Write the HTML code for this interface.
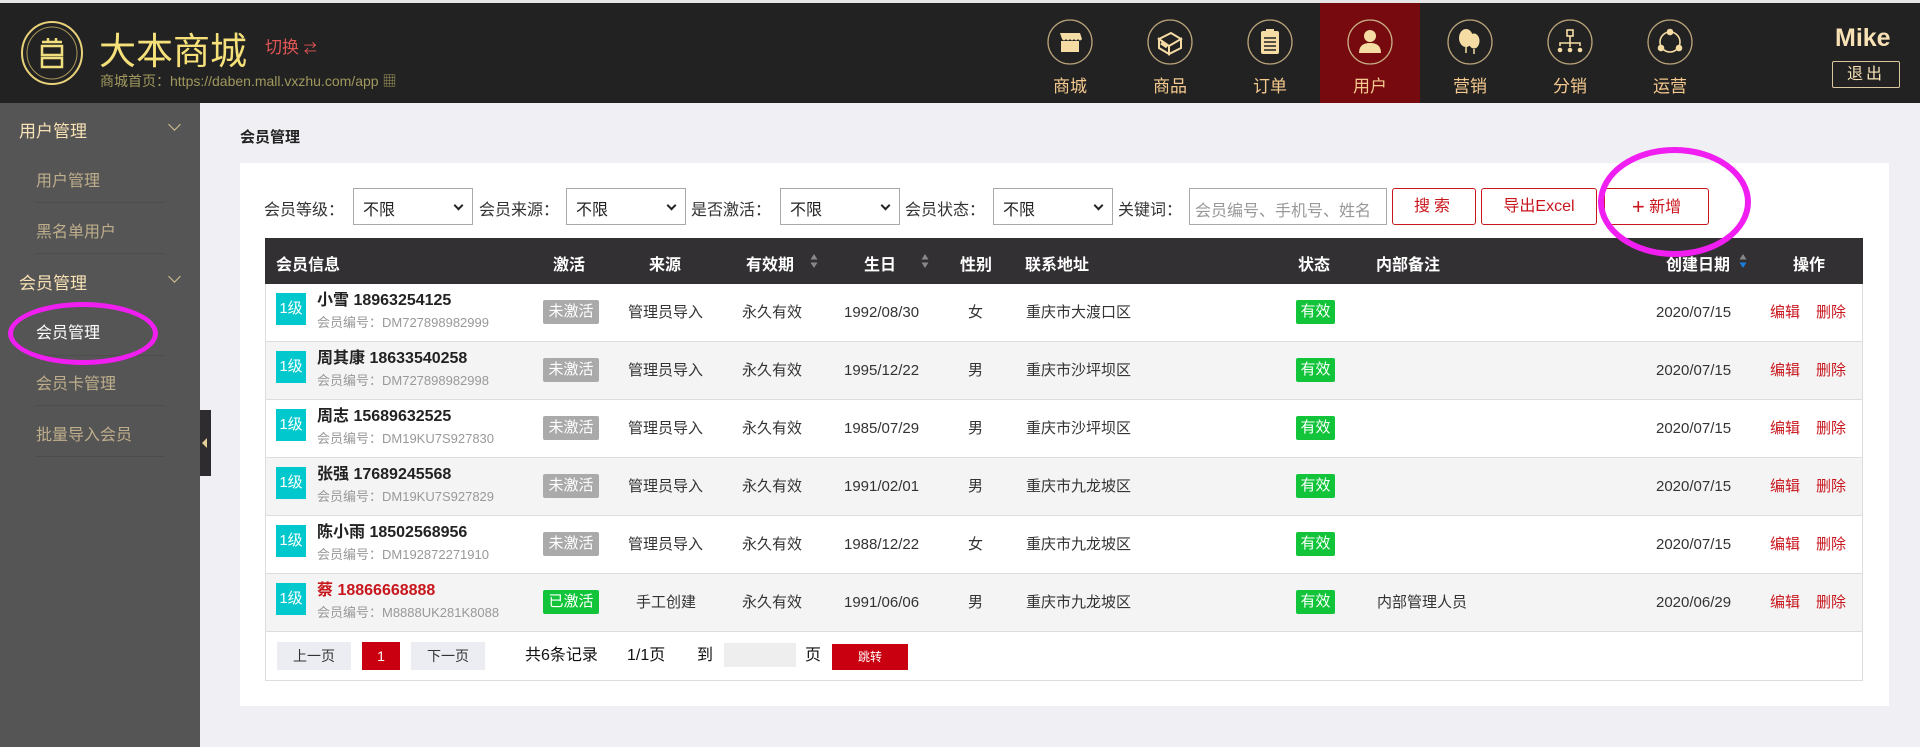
<!DOCTYPE html>
<html><head><meta charset="utf-8"><style>
*{margin:0;padding:0;box-sizing:border-box}
body{width:1920px;height:747px;overflow:hidden;background:#efeff4;font-family:"Liberation Sans","Noto Sans CJK SC",sans-serif;position:relative;color:#333}
.a{position:absolute;white-space:nowrap}
#top{position:absolute;left:0;top:0;width:1920px;height:3px;background:#e6e6e6}
#hd{position:absolute;left:0;top:3px;width:1920px;height:100px;background:#222}
.nav{position:absolute;top:3px;width:100px;height:100px;text-align:center}
.nav svg{position:absolute;left:27px;top:16px}
.nav span{position:absolute;left:0;width:100px;top:69px;font-size:17px;color:#f5c98f}
#sb{position:absolute;left:0;top:103px;width:200px;height:644px;background:#555}
.g{position:absolute;left:19px;font-size:17px;color:#f7e1b5}
.s{position:absolute;left:36px;font-size:16px;color:#bfae8c}
.sep{position:absolute;left:36px;width:128px;height:1px;background:#4d4d4d}
.chev{position:absolute;left:170px;width:9px;height:9px;border-right:1.5px solid #d9c295;border-bottom:1.5px solid #d9c295;transform:rotate(45deg)}
#panel{position:absolute;left:240px;top:163px;width:1649px;height:543px;background:#fff}
.lbl{position:absolute;top:196px;font-size:16px;color:#333}
.sel{position:absolute;top:188px;width:120px;height:37px;border:1px solid #a9a9a9;background:#fff;font-size:16px;padding:7px 0 0 9px;color:#222}
.sel:after{content:"";position:absolute;right:10px;top:13px;width:5px;height:5px;border-right:2px solid #222;border-bottom:2px solid #222;transform:rotate(45deg)}
.btn{position:absolute;top:188px;height:37px;border:1px solid #c8161d;border-radius:3px;color:#c8161d;font-size:16px;text-align:center;line-height:35px;background:#fff}
#th{position:absolute;left:265px;top:238px;width:1598px;height:46px;background:#333033;color:#fff;font-weight:bold;font-size:16px}
#th div{position:absolute;top:13px}
.row{position:absolute;left:265px;width:1598px;height:58px;border-left:1px solid #ddd;border-right:1px solid #ddd;border-bottom:1px solid #ddd}
.row div{position:absolute;white-space:nowrap;font-size:15px;color:#333;line-height:20px;top:19px}
.row .lv{left:10px;top:9px;width:30px;height:32px;background:#00c8cc;color:#fff;font-size:15px;text-align:center;line-height:32px}
.row .nm{left:51px;top:7px;font-weight:bold;font-size:16px;color:#222}
.row .id{left:51px;top:29px;font-size:13px;color:#999}
.row .na{left:277px;top:16px;width:56px;height:24px;background:#aaa;color:#fff;text-align:center;line-height:24px;border-radius:2px}
.row .ok{left:1030px;top:16px;width:39px;height:24px;background:#11c43a;color:#fff;text-align:center;line-height:24px;border-radius:2px}
.row .ed{color:#c8161d}
#bt{position:absolute;left:265px;top:632px;width:1598px;height:49px;border:1px solid #ddd;border-top:none}
.pg{position:absolute;top:10px;height:28px;font-size:14px;text-align:center;line-height:28px}
</style></head><body>
<div id="top"></div>
<div id="hd"></div>
<svg class="a" style="left:20px;top:20px" width="64" height="66" viewBox="0 0 64 66"><ellipse cx="32" cy="33" rx="30" ry="31" fill="none" stroke="#e8d27a" stroke-width="2"/><ellipse cx="32" cy="33" rx="25" ry="26" fill="none" stroke="#a8965a" stroke-width="1"/><path d="M22 22h20M28 18v4M36 18v4" stroke="#f1df7e" stroke-width="2.5"/><rect x="22" y="26" width="20" height="9" fill="none" stroke="#f1df7e" stroke-width="2.5"/><rect x="22" y="38" width="20" height="9" fill="none" stroke="#f1df7e" stroke-width="2.5"/></svg>
<div class="a" style="left:99px;top:21px;font-size:37px;color:#f5e07a">大本商城</div>
<div class="a" style="left:265px;top:33px;font-size:17px;color:#e25555">切换 <span style="font-size:13px">⇄</span></div>
<div class="a" style="left:100px;top:71px;font-size:14px;color:#a0985e">商城首页：https://daben.mall.vxzhu.com/app ▦</div>

<div class="nav" style="left:1020px"><svg width="46" height="46"><circle cx="23" cy="23" r="22" fill="none" stroke="#b9a27a" stroke-width="1.3"/><path d="M13 14h20l2 6q-2 3-4 0q-2 3-4 0q-2 3-4 0q-2 3-4 0q-2 3-4 0z" fill="#f5dca5"/><rect x="14" y="22" width="18" height="11" fill="#f5dca5"/></svg><span>商城</span></div>
<div class="nav" style="left:1120px"><svg width="46" height="46"><circle cx="23" cy="23" r="22" fill="none" stroke="#b9a27a" stroke-width="1.3"/><path d="M12 20l12-6 10 6-12 7z M12 20v9l10 6v-8z M22 27l12-7v9l-12 6z" fill="none" stroke="#f5dca5" stroke-width="2"/><path d="M14 24l6 4" stroke="#f5dca5" stroke-width="3"/></svg><span>商品</span></div>
<div class="nav" style="left:1220px"><svg width="46" height="46"><circle cx="23" cy="23" r="22" fill="none" stroke="#b9a27a" stroke-width="1.3"/><rect x="14" y="12" width="18" height="23" rx="2" fill="#f5dca5"/><rect x="19" y="10" width="8" height="4" fill="#f5dca5"/><path d="M17 19h12M17 23h12M17 27h12M17 31h12" stroke="#222" stroke-width="1.6"/></svg><span>订单</span></div>
<div class="a" style="left:1320px;top:3px;width:100px;height:100px;background:#770a0f"></div>
<div class="nav" style="left:1320px"><svg width="46" height="46"><circle cx="23" cy="23" r="22" fill="none" stroke="#c9ae86" stroke-width="1.3"/><circle cx="23" cy="17" r="6" fill="#f5dca5"/><path d="M12 34q0-10 11-10q11 0 11 10z" fill="#f5dca5"/></svg><span>用户</span></div>
<div class="nav" style="left:1420px"><svg width="46" height="46"><circle cx="23" cy="23" r="22" fill="none" stroke="#b9a27a" stroke-width="1.3"/><ellipse cx="27" cy="22" rx="6" ry="8" fill="#f5dca5" stroke="#222" stroke-width="1"/><ellipse cx="19" cy="19" rx="7" ry="9" fill="#f5dca5"/><path d="M19 28v6M27 30v5" stroke="#f5dca5" stroke-width="1.5"/></svg><span>营销</span></div>
<div class="nav" style="left:1520px"><svg width="46" height="46"><circle cx="23" cy="23" r="22" fill="none" stroke="#b9a27a" stroke-width="1.3"/><rect x="20" y="11" width="6" height="6" fill="none" stroke="#f5dca5" stroke-width="1.6"/><path d="M23 17v7M13 27v-3h20v3M23 24v4" stroke="#f5dca5" stroke-width="1.6" fill="none"/><circle cx="13" cy="31" r="2.3" fill="#f5dca5"/><circle cx="23" cy="31" r="2.3" fill="#f5dca5"/><circle cx="33" cy="31" r="2.3" fill="#f5dca5"/></svg><span>分销</span></div>
<div class="nav" style="left:1620px"><svg width="46" height="46"><circle cx="23" cy="23" r="22" fill="none" stroke="#b9a27a" stroke-width="1.3"/><circle cx="23" cy="23" r="10" fill="none" stroke="#f5dca5" stroke-width="1.6"/><circle cx="23" cy="13" r="3.3" fill="#f5dca5"/><circle cx="14" cy="29" r="3.3" fill="#f5dca5"/><circle cx="32" cy="29" r="3.3" fill="#f5dca5"/></svg><span>运营</span></div>
<div class="a" style="left:1835px;top:24px;font-size:25px;font-weight:bold;color:#f7e1b5">Mike</div>
<div class="a" style="left:1832px;top:61px;width:68px;height:27px;border:1px solid #d9c79e;border-radius:2px;color:#f7e1b5;font-size:16px;text-align:center;line-height:25px;letter-spacing:3px">退出</div>

<div id="sb"></div>
<div class="g" style="top:117px">用户管理</div><div class="chev" style="top:120px"></div>
<div class="s" style="top:167px">用户管理</div><div class="sep" style="top:202px"></div>
<div class="s" style="top:218px">黑名单用户</div><div class="sep" style="top:253px"></div>
<div class="g" style="top:269px">会员管理</div><div class="chev" style="top:272px"></div>
<div class="s" style="top:319px;color:#fff">会员管理</div><div class="sep" style="top:355px"></div>
<div class="s" style="top:370px">会员卡管理</div><div class="sep" style="top:405px"></div>
<div class="s" style="top:421px">批量导入会员</div><div class="sep" style="top:456px"></div>
<div class="a" style="left:200px;top:410px;width:11px;height:66px;background:#2e2c2e"></div>
<div class="a" style="left:202px;top:438px;width:0;height:0;border-top:5px solid transparent;border-bottom:5px solid transparent;border-right:5px solid #e7cf99"></div>
<div class="a" style="left:8px;top:302px;width:150px;height:63px;border:5px solid #f01ef0;border-radius:50%"></div>

<div class="a" style="left:240px;top:126px;font-size:15px;font-weight:bold;color:#222">会员管理</div>
<div id="panel"></div>
<div class="lbl" style="left:264px">会员等级：</div><div class="sel" style="left:353px">不限</div>
<div class="lbl" style="left:479px">会员来源：</div><div class="sel" style="left:566px">不限</div>
<div class="lbl" style="left:691px">是否激活：</div><div class="sel" style="left:780px">不限</div>
<div class="lbl" style="left:905px">会员状态：</div><div class="sel" style="left:993px">不限</div>
<div class="lbl" style="left:1118px">关键词：</div>
<div class="a" style="left:1189px;top:188px;width:198px;height:37px;border:1px solid #a9a9a9;font-size:16px;color:#999;padding:8px 0 0 5px;overflow:hidden">会员编号、手机号、姓名</div>
<div class="btn" style="left:1392px;width:84px;letter-spacing:4px">搜索</div>
<div class="btn" style="left:1481px;width:116px">导出Excel</div>
<div class="btn" style="left:1604px;width:105px"><b style="font-size:22px;font-weight:normal;vertical-align:-2px">+</b> 新增</div>

<div id="th">
<div style="left:11px">会员信息</div><div style="left:288px">激活</div><div style="left:384px">来源</div><div style="left:481px">有效期</div><div style="left:599px">生日</div><div style="left:695px">性别</div><div style="left:760px">联系地址</div><div style="left:1033px">状态</div><div style="left:1111px">内部备注</div><div style="left:1401px">创建日期</div><div style="left:1528px">操作</div>
</div>
<svg class="a" style="left:810px;top:253px" width="8" height="16"><path d="M4 1l3.5 5.5h-7zM4 15l3.5-5.5h-7z" fill="#888"/></svg>
<svg class="a" style="left:921px;top:253px" width="8" height="16"><path d="M4 1l3.5 5.5h-7zM4 15l3.5-5.5h-7z" fill="#888"/></svg>
<svg class="a" style="left:1739px;top:253px" width="8" height="16"><path d="M4 1l3.5 5.5h-7z" fill="#888"/><path d="M4 15l3.5-5.5h-7z" fill="#1a7ee0"/></svg>

<div class="row" style="top:284px;background:#fff"><div class="lv">1级</div><div class="nm">小雪 18963254125</div><div class="id">会员编号：DM727898982999</div><div class="na">未激活</div><div style="left:362px">管理员导入</div><div style="left:476px">永久有效</div><div style="left:578px">1992/08/30</div><div style="left:702px">女</div><div style="left:760px">重庆市大渡口区</div><div class="ok">有效</div><div style="left:1390px">2020/07/15</div><div class="ed" style="left:1504px">编辑</div><div class="ed" style="left:1550px">删除</div></div>
<div class="row" style="top:342px;background:#f4f4f4"><div class="lv">1级</div><div class="nm">周其康 18633540258</div><div class="id">会员编号：DM727898982998</div><div class="na">未激活</div><div style="left:362px">管理员导入</div><div style="left:476px">永久有效</div><div style="left:578px">1995/12/22</div><div style="left:702px">男</div><div style="left:760px">重庆市沙坪坝区</div><div class="ok">有效</div><div style="left:1390px">2020/07/15</div><div class="ed" style="left:1504px">编辑</div><div class="ed" style="left:1550px">删除</div></div>
<div class="row" style="top:400px;background:#fff"><div class="lv">1级</div><div class="nm">周志 15689632525</div><div class="id">会员编号：DM19KU7S927830</div><div class="na">未激活</div><div style="left:362px">管理员导入</div><div style="left:476px">永久有效</div><div style="left:578px">1985/07/29</div><div style="left:702px">男</div><div style="left:760px">重庆市沙坪坝区</div><div class="ok">有效</div><div style="left:1390px">2020/07/15</div><div class="ed" style="left:1504px">编辑</div><div class="ed" style="left:1550px">删除</div></div>
<div class="row" style="top:458px;background:#f4f4f4"><div class="lv">1级</div><div class="nm">张强 17689245568</div><div class="id">会员编号：DM19KU7S927829</div><div class="na">未激活</div><div style="left:362px">管理员导入</div><div style="left:476px">永久有效</div><div style="left:578px">1991/02/01</div><div style="left:702px">男</div><div style="left:760px">重庆市九龙坡区</div><div class="ok">有效</div><div style="left:1390px">2020/07/15</div><div class="ed" style="left:1504px">编辑</div><div class="ed" style="left:1550px">删除</div></div>
<div class="row" style="top:516px;background:#fff"><div class="lv">1级</div><div class="nm">陈小雨 18502568956</div><div class="id">会员编号：DM192872271910</div><div class="na">未激活</div><div style="left:362px">管理员导入</div><div style="left:476px">永久有效</div><div style="left:578px">1988/12/22</div><div style="left:702px">女</div><div style="left:760px">重庆市九龙坡区</div><div class="ok">有效</div><div style="left:1390px">2020/07/15</div><div class="ed" style="left:1504px">编辑</div><div class="ed" style="left:1550px">删除</div></div>
<div class="row" style="top:574px;background:#f4f4f4"><div class="lv">1级</div><div class="nm" style="color:#c8161d">蔡 18866668888</div><div class="id">会员编号：M8888UK281K8088</div><div class="na" style="background:#11c43a">已激活</div><div style="left:370px">手工创建</div><div style="left:476px">永久有效</div><div style="left:578px">1991/06/06</div><div style="left:702px">男</div><div style="left:760px">重庆市九龙坡区</div><div class="ok">有效</div><div style="left:1111px">内部管理人员</div><div style="left:1390px">2020/06/29</div><div class="ed" style="left:1504px">编辑</div><div class="ed" style="left:1550px">删除</div></div>

<div id="bt">
<div class="pg" style="left:11px;width:74px;background:#ebedf2">上一页</div>
<div class="pg" style="left:96px;width:38px;background:#c8000f;color:#fff">1</div>
<div class="pg" style="left:145px;width:74px;background:#ebedf2">下一页</div>
<div class="pg" style="left:259px;font-size:16px;color:#111">共6条记录</div>
<div class="pg" style="left:361px;font-size:16px;color:#111">1/1页</div>
<div class="pg" style="left:431px;font-size:16px;color:#111">到</div>
<div class="pg" style="left:458px;width:72px;top:11px;height:24px;background:#eee"></div>
<div class="pg" style="left:539px;font-size:16px;color:#111">页</div>
<div class="pg" style="left:566px;top:12px;height:26px;line-height:26px;width:76px;background:#c8000f;color:#fff;font-size:12px">跳转</div>
</div>

<div class="a" style="left:1598px;top:147px;width:153px;height:110px;border:6px solid #f01ef0;border-radius:50%"></div>
</body></html>
